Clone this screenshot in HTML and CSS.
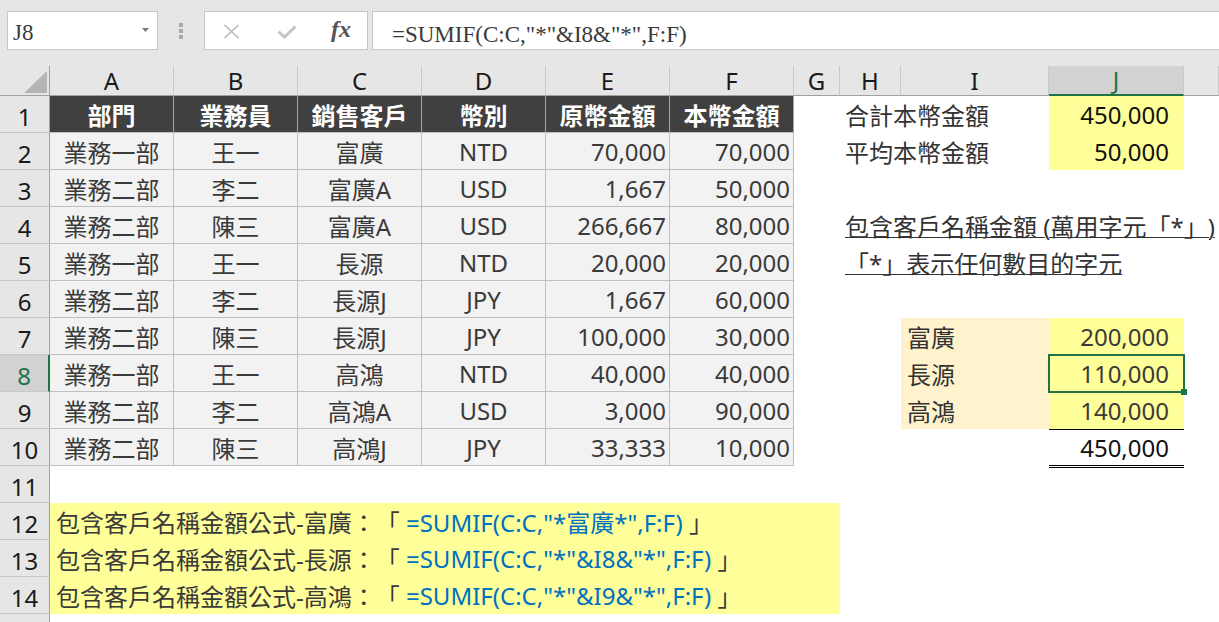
FILE: index.html
```html
<!DOCTYPE html>
<html lang="zh-Hant">
<head>
<meta charset="utf-8">
<title>SUMIF</title>
<link rel="stylesheet" href="styles.css">
</head>
<body>
<div class="app">
  <div class="topbar">
    <div class="namebox">
      <span class="ref">J8</span>
      <svg class="dd" width="7" height="4" viewBox="0 0 7 4"><path d="M0 0h7L3.5 4z" fill="#7a7a7a"/></svg>
    </div>
    <div class="grip"><i></i><i></i><i></i></div>
    <div class="fxbtns">
      <svg class="icon-x" width="17" height="15" viewBox="0 0 17 15"><path d="M1.5 1L15.5 14M15.5 1L1.5 14" stroke="#b8b8b8" stroke-width="1.6" fill="none"/></svg>
      <svg class="icon-ok" width="20" height="14" viewBox="0 0 20 14"><path d="M1.5 6.5L7.5 12L18.5 1.5" stroke="#c4c4c4" stroke-width="3" fill="none"/></svg>
      <span class="fx">fx</span>
    </div>
    <div class="formula">=SUMIF(C:C,"*"&amp;I8&amp;"*",F:F)</div>
  </div>

  <div class="sheet">
    <!-- column headers -->
    <div class="corner"><svg width="50" height="30" viewBox="0 0 50 30"><polygon points="47,5 47,27 24,27" fill="#b5b5b5"/></svg></div>
    <div class="ch">A</div><div class="ch">B</div><div class="ch">C</div><div class="ch">D</div><div class="ch">E</div><div class="ch">F</div>
    <div class="ch">G</div><div class="ch">H</div><div class="ch">I</div><div class="ch sel">J</div><div class="ch"></div>

    <!-- row 1 -->
    <div class="rh">1</div>
    <div class="th">部門</div><div class="th">業務員</div><div class="th">銷售客戶</div><div class="th">幣別</div><div class="th">原幣金額</div><div class="th">本幣金額</div>
    <div class="e"></div><div class="lbl">合計本幣金額</div><div class="yv dark">450,000</div><div class="e"></div>

    <!-- row 2 -->
    <div class="rh">2</div>
    <div class="td">業務一部</div><div class="td">王一</div><div class="td">富廣</div><div class="td">NTD</div><div class="td num">70,000</div><div class="td num">70,000</div>
    <div class="e"></div><div class="lbl">平均本幣金額</div><div class="yv dark">50,000</div><div class="e"></div>

    <!-- row 3 -->
    <div class="rh">3</div>
    <div class="td">業務二部</div><div class="td">李二</div><div class="td">富廣A</div><div class="td">USD</div><div class="td num">1,667</div><div class="td num">50,000</div>
    <div class="e rest5"></div>

    <!-- row 4 -->
    <div class="rh">4</div>
    <div class="td">業務二部</div><div class="td">陳三</div><div class="td">富廣A</div><div class="td">USD</div><div class="td num">266,667</div><div class="td num">80,000</div>
    <div class="e"></div><div class="note">包含客戶名稱金額 (萬用字元「*」)</div>

    <!-- row 5 -->
    <div class="rh">5</div>
    <div class="td">業務一部</div><div class="td">王一</div><div class="td">長源</div><div class="td">NTD</div><div class="td num">20,000</div><div class="td num">20,000</div>
    <div class="e"></div><div class="note">「*」表示任何數目的字元</div>

    <!-- row 6 -->
    <div class="rh">6</div>
    <div class="td">業務二部</div><div class="td">李二</div><div class="td">長源J</div><div class="td">JPY</div><div class="td num">1,667</div><div class="td num">60,000</div>
    <div class="e rest5"></div>

    <!-- row 7 -->
    <div class="rh">7</div>
    <div class="td">業務二部</div><div class="td">陳三</div><div class="td">長源J</div><div class="td">JPY</div><div class="td num">100,000</div><div class="td num">30,000</div>
    <div class="e"></div><div class="e"></div><div class="iv">富廣</div><div class="yv">200,000</div><div class="e"></div>

    <!-- row 8 -->
    <div class="rh sel">8</div>
    <div class="td">業務一部</div><div class="td">王一</div><div class="td">高鴻</div><div class="td">NTD</div><div class="td num">40,000</div><div class="td num">40,000</div>
    <div class="e"></div><div class="e"></div><div class="iv">長源</div><div class="yv cur">110,000</div><div class="e"></div>

    <!-- row 9 -->
    <div class="rh">9</div>
    <div class="td">業務二部</div><div class="td">李二</div><div class="td">高鴻A</div><div class="td">USD</div><div class="td num">3,000</div><div class="td num">90,000</div>
    <div class="e"></div><div class="e"></div><div class="iv">高鴻</div><div class="yv under">140,000</div><div class="e"></div>

    <!-- row 10 -->
    <div class="rh">10</div>
    <div class="td">業務二部</div><div class="td">陳三</div><div class="td">高鴻J</div><div class="td">JPY</div><div class="td num">33,333</div><div class="td num">10,000</div>
    <div class="e"></div><div class="e"></div><div class="e"></div><div class="tot">450,000</div><div class="e"></div>

    <!-- row 11 -->
    <div class="rh">11</div><div class="e rest11"></div>

    <!-- rows 12-14 -->
    <div class="rh">12</div>
    <div class="fr">包含客戶名稱金額公式-富廣：「 <b>=SUMIF(C:C,"*富廣*",F:F)</b> 」</div>
    <div class="e rest4"></div>

    <div class="rh">13</div>
    <div class="fr">包含客戶名稱金額公式-長源：「 <b>=SUMIF(C:C,"*"&amp;I8&amp;"*",F:F)</b> 」</div>
    <div class="e rest4"></div>

    <div class="rh">14</div>
    <div class="fr">包含客戶名稱金額公式-高鴻：「 <b>=SUMIF(C:C,"*"&amp;I9&amp;"*",F:F)</b> 」</div>
    <div class="e rest4"></div>

    <!-- row 15 (only its top edge is visible) -->
    <div class="rh"></div><div class="e rest11"></div>
  </div>
</div>
</body>
</html>
```

FILE: styles.css
```css
* {
  box-sizing: border-box;
}

html, body {
  margin: 0;
  padding: 0;
}

body {
  width: 1219px;
  height: 622px;
  overflow: hidden;
  background: #ffffff;
  font-family: "Noto Sans", "Noto Sans CJK TC", sans-serif;
  font-size: 24px;
  color: #3a3a3a;
  text-spacing-trim: space-all;
}

/* ---------- formula bar ---------- */
.topbar {
  display: flex;
  align-items: flex-start;
  height: 66px;
  padding: 11px 0 0 7px;
  background: #e6e6e6;
}

.namebox {
  width: 151px;
  height: 39px;
  background: #ffffff;
  border: 1px solid #c6c6c6;
  display: flex;
  align-items: flex-start;
  justify-content: space-between;
  padding: 0 8px 0 5px;
}

.ref {
  font-family: "Liberation Serif", serif;
  font-size: 23px;
  line-height: 29px;
  padding-top: 6px;
  color: #3a3a3a;
}

.dd {
  margin-top: 16px;
}

.grip {
  width: 46px;
  height: 39px;
  display: flex;
  flex-direction: column;
  align-items: center;
  justify-content: center;
  gap: 2px;
}

.grip i {
  display: block;
  width: 4px;
  height: 4px;
  background: #a9a9a9;
}

.fxbtns {
  width: 164px;
  height: 39px;
  background: #ffffff;
  border: 1px solid #c6c6c6;
  display: flex;
  align-items: center;
  padding-left: 18px;
}

.icon-x {
  margin-top: 1px;
}

.icon-ok {
  margin-left: 37px;
  margin-top: 3px;
}

.fx {
  margin-left: 34px;
  font-family: "Liberation Serif", serif;
  font-style: italic;
  font-weight: 700;
  font-size: 24px;
  line-height: 25px;
  color: #555555;
  margin-top: -2px;
}

.formula {
  flex: 1;
  height: 39px;
  margin-left: 4px;
  margin-right: -2px;
  background: #ffffff;
  border: 1px solid #c6c6c6;
  padding: 8px 0 0 19px;
  font-family: "Liberation Serif", serif;
  font-size: 23px;
  line-height: 29px;
  color: #3a3a3a;
  white-space: nowrap;
}

/* ---------- sheet grid ---------- */
.sheet {
  display: grid;
  grid-template-columns: 50px repeat(6, 124px) 46px 61px 148px 135px 1fr;
  grid-template-rows: 30px;
  grid-auto-rows: 37px;
}

.corner {
  background: #e6e6e6;
  border-right: 1px solid #a0a0a0;
  border-bottom: 1px solid #a0a0a0;
}

.corner svg {
  display: block;
}

.ch {
  background: #e6e6e6;
  border-right: 1px solid #c9c9c9;
  border-bottom: 1px solid #a0a0a0;
  display: flex;
  align-items: center;
  justify-content: center;
  color: #1a1a1a;
  line-height: 1;
}

.ch.sel {
  background: #d2d2d2;
  color: #217346;
  border-bottom: 2px solid #217346;
}

.rh {
  background: #e6e6e6;
  border-right: 1px solid #a0a0a0;
  border-bottom: 1px solid #c9c9c9;
  text-align: center;
  line-height: 32px;
  padding-top: 5px;
  color: #1a1a1a;
}

.rh.sel {
  background: #d2d2d2;
  color: #217346;
  border-right: 2px solid #217346;
}

.th {
  background: #404040;
  color: #ffffff;
  font-weight: 700;
  border-right: 1px solid #a6a6a6;
  border-bottom: 1px solid #bfbfbf;
  display: flex;
  align-items: center;
  justify-content: center;
  white-space: nowrap;
}

.td {
  background: #f2f2f2;
  border-right: 1px solid #bfbfbf;
  border-bottom: 1px solid #bfbfbf;
  display: flex;
  align-items: center;
  justify-content: center;
  white-space: nowrap;
}

.td.num {
  justify-content: flex-end;
  padding-right: 3px;
}

.rest4 {
  grid-column: span 4;
}

.rest5 {
  grid-column: span 5;
}

.rest11 {
  grid-column: span 11;
}

.lbl {
  grid-column: span 2;
  display: flex;
  align-items: center;
  padding-left: 5px;
  white-space: nowrap;
  color: #333333;
}

.note {
  grid-column: span 4;
  display: flex;
  align-items: center;
  padding-left: 5px;
  white-space: nowrap;
  color: #333333;
  text-decoration: underline;
  text-decoration-thickness: 1px;
  text-underline-offset: 1px;
}

.yv {
  background: #ffff99;
  display: flex;
  align-items: center;
  justify-content: flex-end;
  padding-right: 15px;
  color: #3a3a3a;
}

.yv.dark {
  color: #111111;
}

.yv.cur {
  position: relative;
}

.yv.cur::before {
  content: "";
  position: absolute;
  left: -1px;
  top: -1px;
  right: -1px;
  bottom: -1px;
  border: 2px solid #217346;
}

.yv.cur::after {
  content: "";
  position: absolute;
  right: -3px;
  bottom: -3px;
  width: 6px;
  height: 6px;
  background: #217346;
}

.yv.under {
  border-bottom: 1px solid #000000;
  margin-bottom: -1px;
}

.iv {
  background: #fff2cc;
  display: flex;
  align-items: center;
  padding-left: 6px;
  color: #333333;
  white-space: nowrap;
}

.tot {
  display: flex;
  align-items: center;
  justify-content: flex-end;
  padding-right: 15px;
  color: #111111;
  border-bottom: 3px double #000000;
  margin-bottom: -2px;
}

.fr {
  grid-column: span 7;
  background: #ffff99;
  display: flex;
  align-items: center;
  padding-left: 6px;
  white-space: pre;
  color: #3a3a3a;
}

.fr b {
  font-weight: 400;
  color: #0070c0;
}
```
